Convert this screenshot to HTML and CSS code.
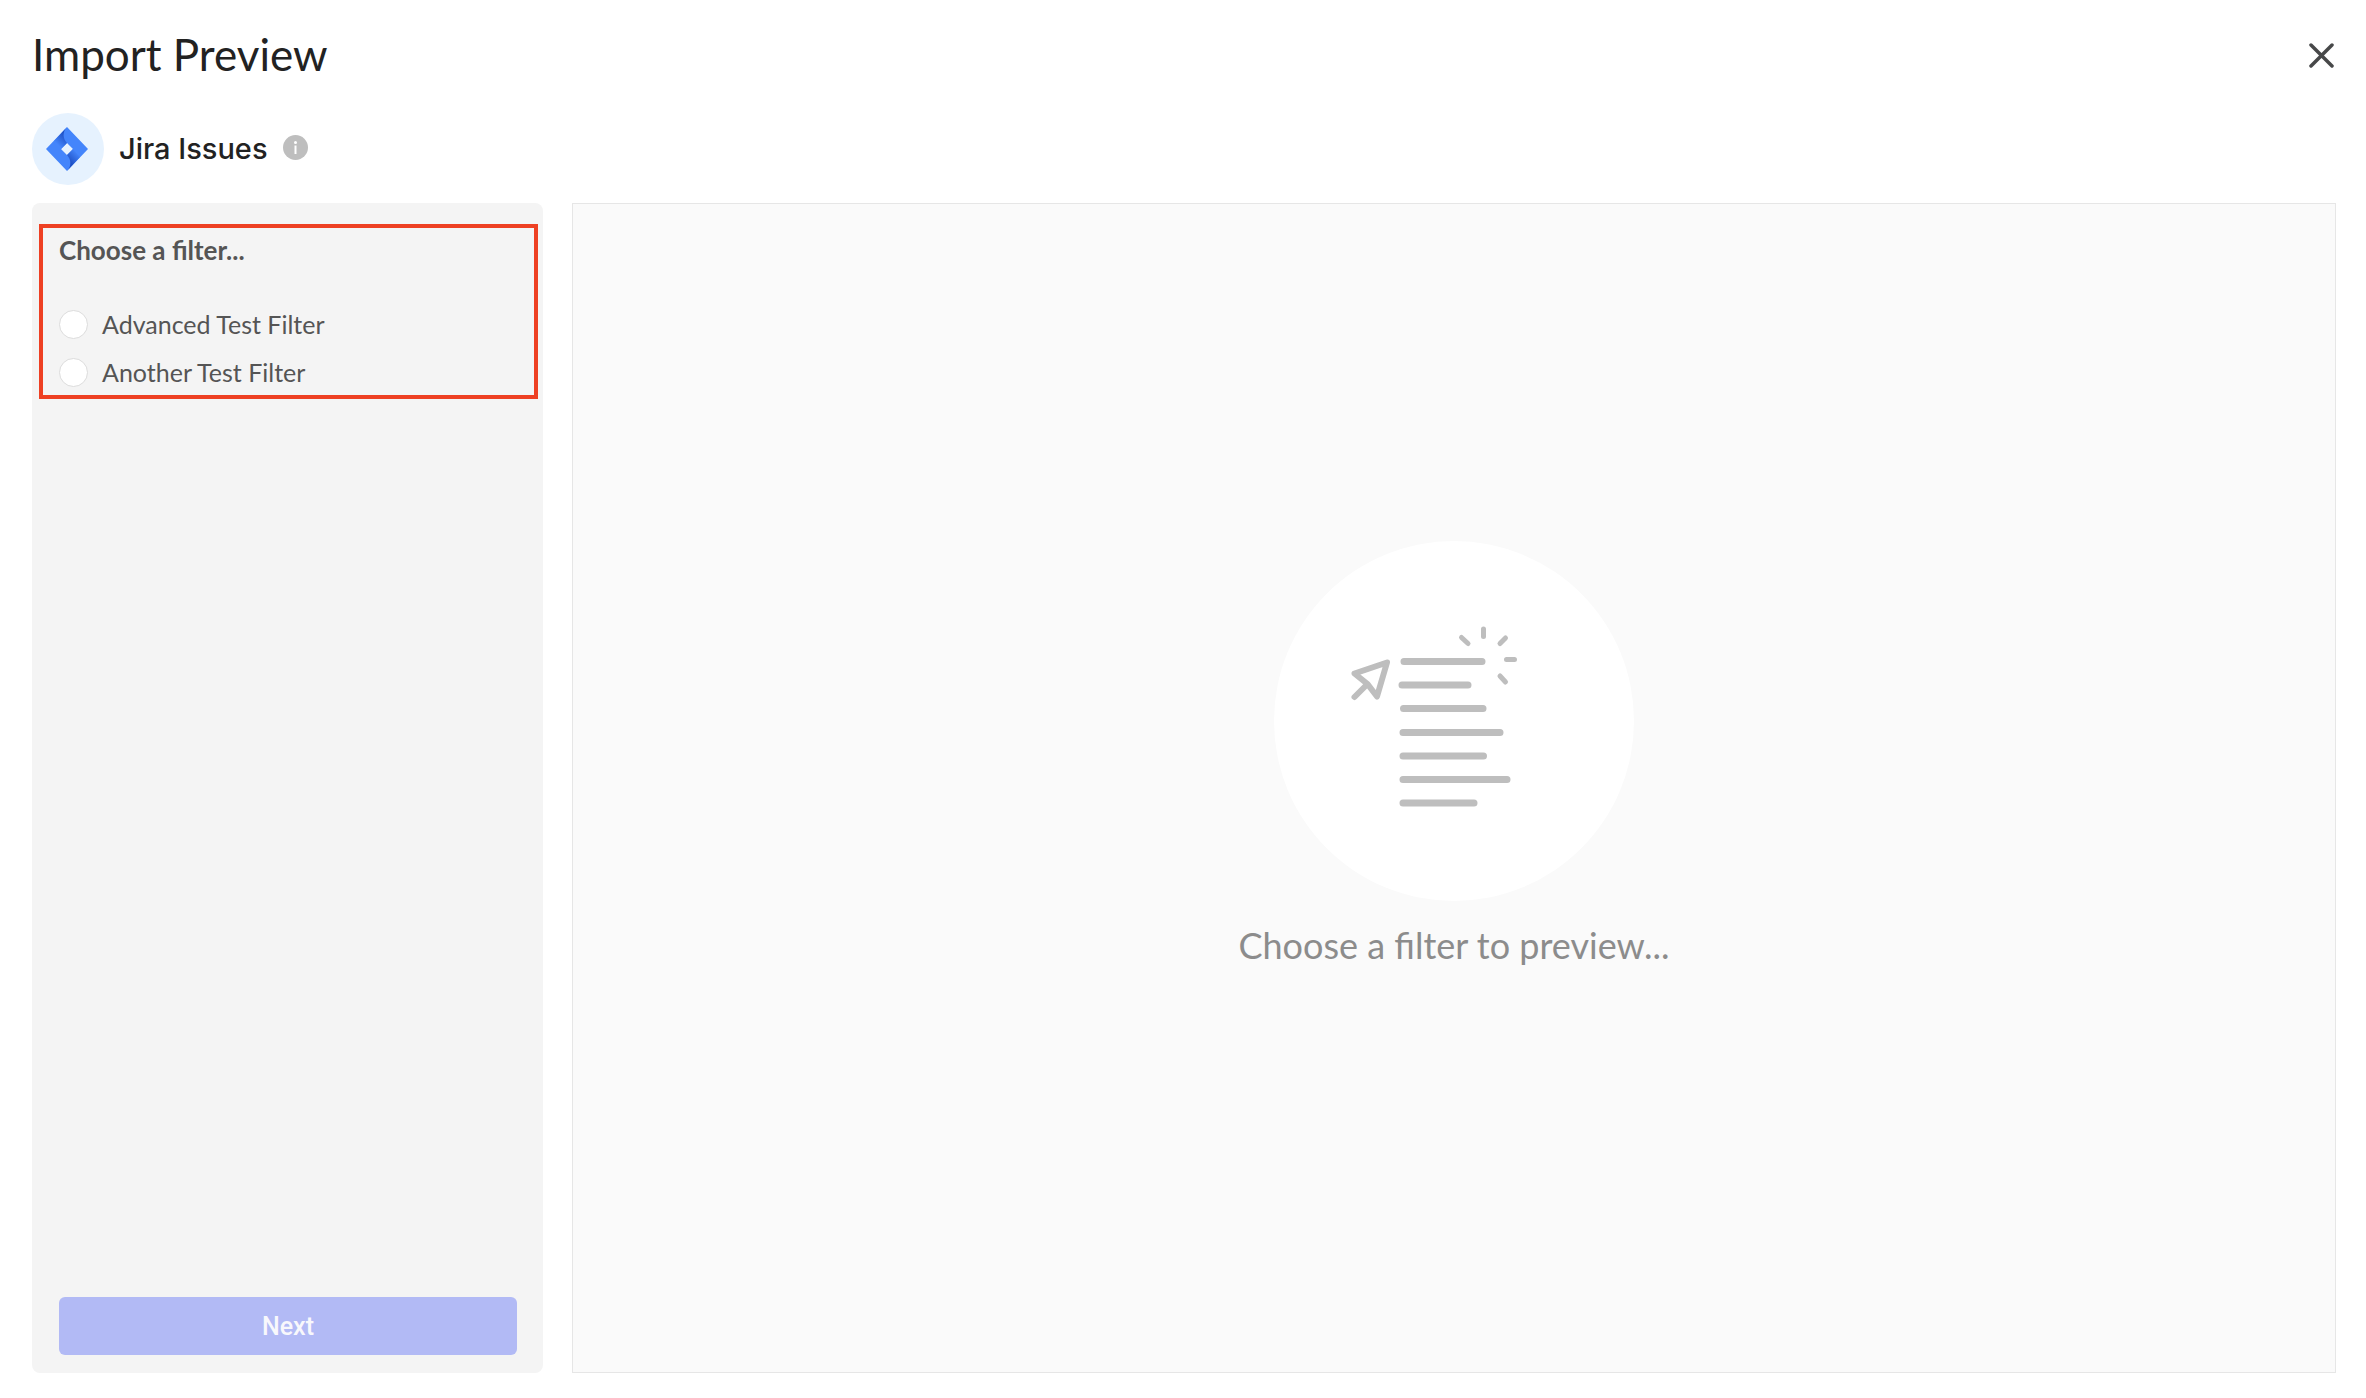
FILE: index.html
```html
<!DOCTYPE html>
<html lang="en">

<head>
    <meta charset="UTF-8">
    <meta name="viewport" content="width=device-width, initial-scale=1.0">
    <link rel="stylesheet" href="styles.css">
    <title>Import Preview</title>
</head>

<body>

    <div class="import-modal">
        <header class="modal-header">
            <h1>Import Preview</h1>
            <button class="close-button" type="button" aria-label="Close">
                <svg width="28" height="28" viewBox="0 0 28 28">
                    <path d="M3 5L24 26M24 5L3 26" fill="none" stroke="#474849" stroke-width="3.500" stroke-linecap="round" />
                </svg>
            </button>
        </header>

        <div class="source">
            <div class="source-logo">
                <svg width="44" height="44" viewBox="0 0 44 44">
                    <defs>
                        <linearGradient id="fold-top" x1="20" y1="8" x2="11" y2="17" gradientUnits="userSpaceOnUse">
                            <stop offset="0" stop-color="#1d4fc4" />
                            <stop offset="1" stop-color="#4485fb" />
                        </linearGradient>
                        <linearGradient id="fold-bottom" x1="24" y1="36" x2="33" y2="27" gradientUnits="userSpaceOnUse">
                            <stop offset="0" stop-color="#1d4fc4" />
                            <stop offset="1" stop-color="#4485fb" />
                        </linearGradient>
                    </defs>
                    <path d="M21 0L42 22L21 44L0 22ZM21 16L15 22L21 28L27 22Z" fill="#4485fb" fill-rule="evenodd" />
                    <path d="M21 0L8 14L15 22L21 16C17 12 16 5 21 0Z" fill="url(#fold-top)" />
                    <path d="M21 44L34 30L27 22L21 28C25 32 26 39 21 44Z" fill="url(#fold-bottom)" />
                </svg>
            </div>
            <h2>Jira Issues</h2>
            <svg class="info-icon" width="25" height="28" viewBox="0 0 25 28">
                <circle cx="12.5" cy="12.5" r="12.5" fill="#bebebe" />
                <circle cx="12.5" cy="7.5" r="1.5" fill="#fff" />
                <path d="M12.5 10.5V19" stroke="#fff" stroke-width="2" />
            </svg>
        </div>

        <main class="modal-body">
            <form class="sidebar">
                <fieldset class="filters">
                    <legend class="filters-title">Choose a filter...</legend>
                    <label class="filter-item">
                        <input type="radio" name="filter" value="advanced">
                        Advanced Test Filter
                    </label>
                    <label class="filter-item">
                        <input type="radio" name="filter" value="another">
                        Another Test Filter
                    </label>
                </fieldset>
                <button class="next-button" type="submit" disabled>Next</button>
            </form>

            <section class="preview">
                <div class="preview-image">
                    <svg width="360" height="360" viewBox="0 0 360 360" fill="none" stroke="#bebebe" stroke-linecap="round" stroke-linejoin="round">
                        <!-- list lines -->
                        <path stroke-width="7" d="M130 120.500H208M128 144H194M129.500 167.500H209M129 191.500H226M129 215H209.500M129 238.500H233M129 262H200" />
                        <!-- cursor -->
                        <path stroke-width="6" d="M113 121.500L80.500 132.500L93.500 143L103 155.500ZM93.500 143L80.500 156" />
                        <!-- rays -->
                        <path stroke-width="5" d="M187.500 96.500L194 102.500M209.500 88V95.500M231.500 97L226 102.500M232.500 118.500H240.500M226 135L231.500 141" />
                    </svg>
                </div>
                <p class="preview-text">Choose a filter to preview...</p>
            </section>
        </main>
    </div>

</body>

</html>
```
FILE: styles.css
```css
* {
    box-sizing: border-box;
}

body {
    margin: 0;
    font-family: Lato, "Open Sans", sans-serif;
    background-color: #fff;
    color: #222;
}

h1,
h2,
p {
    margin: 0;
    font-weight: 400;
}

.import-modal {
    display: flex;
    flex-direction: column;
    min-height: 100vh;
    padding: 22px 30px 25px 32px;
}

.modal-header {
    display: flex;
    justify-content: space-between;
    align-items: center;
    height: 64px;
}

.modal-header h1 {
    font-size: 44px;
    line-height: 64px;
}

.close-button {
    display: flex;
    padding: 0;
    border: 0;
    background: none;
    cursor: pointer;
}

.source {
    display: flex;
    align-items: center;
    margin: 27px 0 18px;
}

.source-logo {
    display: flex;
    justify-content: center;
    align-items: center;
    width: 72px;
    height: 72px;
    border-radius: 50%;
    background-color: #e6f2fe;
}

.source h2 {
    margin: 0 15px;
    font-family: Inter, sans-serif;
    font-size: 29px;
    font-weight: 500;
    line-height: 40px;
}

.modal-body {
    display: flex;
    flex: 1;
    gap: 29px;
}

.sidebar {
    display: flex;
    flex-direction: column;
    justify-content: space-between;
    width: 511px;
    padding: 21px 5px 18px 7px;
    border-radius: 8px;
    background-color: #f4f4f4;
    color: #555;
}

.filters {
    min-width: 0;
    margin: 0;
    padding: 7px 16px 8px;
    border: 4px solid #ee4023;
    font-size: 25px;
}

.filters-title {
    float: left;
    width: 100%;
    margin-bottom: 45px;
    padding: 0;
    font-size: 26px;
    font-weight: 700;
    line-height: 30px;
}

.filter-item {
    display: flex;
    clear: both;
    align-items: center;
    gap: 14px;
    line-height: 29px;
}

.filter-item + .filter-item {
    margin-top: 19px;
}

.filter-item input {
    appearance: none;
    width: 29px;
    height: 29px;
    margin: 0;
    border: 1px solid #dcdcdc;
    border-radius: 50%;
    background-color: #fff;
}

.filter-item input:checked {
    border: 8px solid #6575ea;
}

.next-button {
    height: 58px;
    margin: 0 21px 0 20px;
    border: 0;
    border-radius: 6px;
    background-color: #b2baf5;
    color: #f8f8fc;
    font-family: Roboto, sans-serif;
    font-size: 25px;
    font-weight: 500;
}

.preview {
    display: flex;
    flex: 1;
    flex-direction: column;
    justify-content: center;
    align-items: center;
    gap: 20px;
    padding-bottom: 66px;
    border: 1px solid #e6e6e6;
    background-color: #fafafa;
}

.preview-image {
    width: 360px;
    height: 360px;
    border-radius: 50%;
    background-color: #fff;
}

.preview-text {
    color: #8c8c8c;
    font-size: 36px;
    line-height: 48px;
}
```
